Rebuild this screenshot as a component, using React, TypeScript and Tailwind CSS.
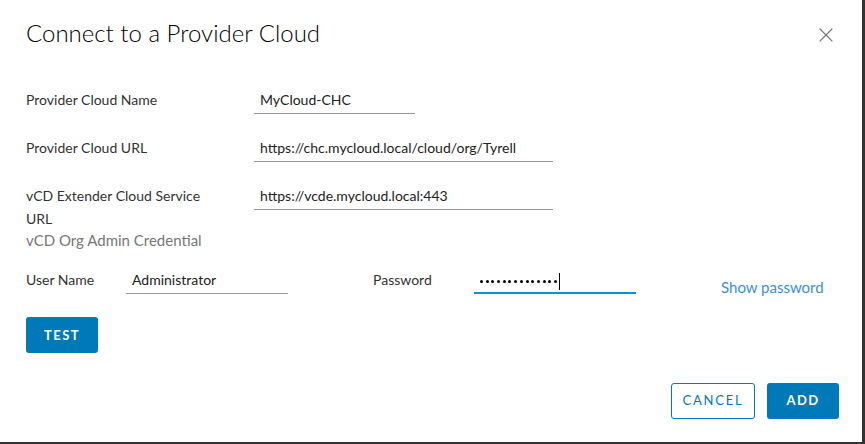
import { X } from "lucide-react";

const font = { fontFamily: "Lato, 'Open Sans', sans-serif" };

function Field({ value, w }: { value: string; w: string }) {
  return (
    <div className={`${w} h-[24px] border-b border-[#9a9a9a] pl-[6px] pb-[3px] leading-[20px] text-[14px] text-[#222]`}>
      {value}
    </div>
  );
}

export default function App() {
  return (
    <div className="w-[865px] h-[444px] bg-[#333]" style={font}>
      <div className="w-[862px] h-[442px] bg-white flex flex-col">
        <div className="flex items-start justify-between pl-[26px] pr-[24px] pt-[17px]">
          <h1 className="text-[24px] leading-[32px] font-light text-black">Connect to a Provider Cloud</h1>
          <button className="mt-[6px] text-[#777]">
            <X size={24} strokeWidth={1.1} />
          </button>
        </div>

        <div className="pl-[26px] mt-[41px] text-[14px] leading-[20px] text-[#333]">
          <div className="flex items-start">
            <div className="w-[228px]">Provider Cloud Name</div>
            <Field value="MyCloud-CHC" w="w-[161px]" />
          </div>
          <div className="flex items-start mt-[24px]">
            <div className="w-[228px]">Provider Cloud URL</div>
            <Field value="https://chc.mycloud.local/cloud/org/Tyrell" w="w-[299px]" />
          </div>
          <div className="flex items-start mt-[24px]">
            <div className="w-[228px] leading-[23px] -mt-[2px]">
              vCD Extender Cloud Service
              <br />
              URL
            </div>
            <Field value="https://vcde.mycloud.local:443" w="w-[299px]" />
          </div>
          <div className="text-[15px] text-[#777]">vCD Org Admin Credential</div>

          <div className="flex items-start mt-[20px]">
            <div className="w-[100px]">User Name</div>
            <Field value="Administrator" w="w-[162px]" />
            <div className="w-[186px] pl-[85px]">Password</div>
            <div className="w-[162px] h-[24px] border-b-2 border-[#0094d2] pl-[6px] flex items-center">
              <div className="flex gap-[2.7px]">
                {Array.from({ length: 14 }).map((_, i) => (
                  <span key={i} className="w-[3px] h-[3px] rounded-full bg-black" />
                ))}
              </div>
              <span className="ml-[2px] w-px h-[17px] bg-black" />
            </div>
            <a className="ml-[85px] mt-[7px] text-[15px] text-[#3c8fdd]">Show password</a>
          </div>

          <button className="mt-[20px] w-[72px] h-[36px] rounded-[3px] bg-[#0079b8] text-white text-[13px] font-bold tracking-[1.4px]">
            TEST
          </button>
        </div>

        <div className="flex justify-end gap-[12px] pr-[23px] mt-[30px]">
          <button className="w-[84px] h-[36px] rounded-[3px] border border-[#0079b8] text-[#0079b8] text-[13px] tracking-[1.8px]">
            CANCEL
          </button>
          <button className="w-[72px] h-[36px] rounded-[3px] bg-[#0079b8] text-white text-[13px] font-bold tracking-[1.4px]">
            ADD
          </button>
        </div>
      </div>
    </div>
  );
}
